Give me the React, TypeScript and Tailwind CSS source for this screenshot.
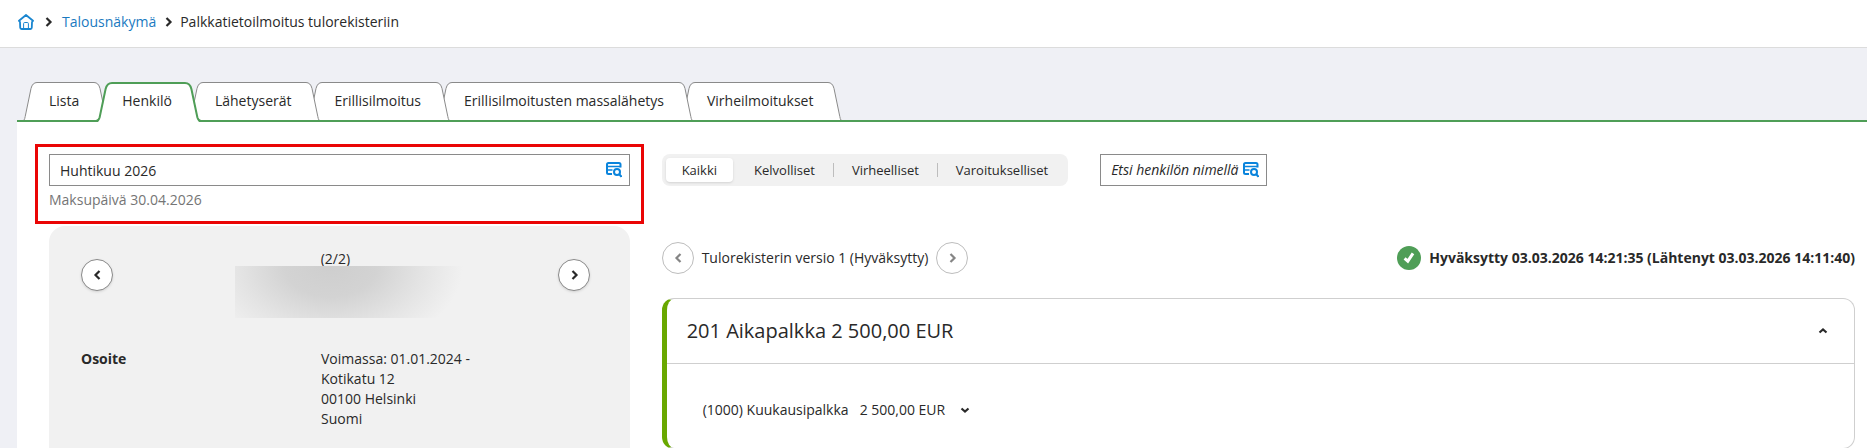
import { useState } from "react";

const tabs = [
  { label: "Lista", layer: "z-[5]" },
  { label: "Henkilö", layer: "z-[6]" },
  { label: "Lähetyserät", layer: "z-[4]" },
  { label: "Erillisilmoitus", layer: "z-[3]" },
  { label: "Erillisilmoitusten massalähetys", layer: "z-[2]" },
  { label: "Virheilmoitukset", layer: "z-[1]" },
];

const filters = ["Kaikki", "Kelvolliset", "Virheelliset", "Varoitukselliset"];

const address = ["Voimassa: 01.01.2024 -", "Kotikatu 12", "00100 Helsinki", "Suomi"];

const chevrons = {
  left: "M8.5 2 L4.5 6 L8.5 10",
  right: "M4.5 2 L8.5 6 L4.5 10",
  up: "M2.5 7.5 L6 4.5 L9.5 7.5",
  down: "M2.5 4.5 L6 7.5 L9.5 4.5",
};

function Chevron({ direction }: { direction: keyof typeof chevrons }) {
  return (
    <svg className="size-3 shrink-0" viewBox="0 0 12 12" fill="none" stroke="currentColor" strokeWidth="2.2" aria-hidden="true">
      <path d={chevrons[direction]} />
    </svg>
  );
}

function HomeIcon() {
  return (
    <svg className="size-4" viewBox="0 0 16 16" fill="none" stroke="currentColor" aria-hidden="true">
      <path d="M8 1 L15 6.8 L14 8 L13.8 13.6 Q13.8 15 12.4 15 H3.6 Q2.2 15 2.2 13.6 L2 8 L1 6.8 Z" strokeWidth="1.8" strokeLinejoin="round" />
      <path d="M5.6 15 V9.6 Q5.6 8.5 6.7 8.5 H9.3 Q10.4 8.5 10.4 9.6 V15" strokeWidth="1" />
    </svg>
  );
}

function TableSearchIcon() {
  return (
    <svg className="size-4" viewBox="0 0 16 16" fill="none" stroke="currentColor" aria-hidden="true">
      <path d="M14.5 5.5 V2.5 Q14.5 1 13 1 H2.5 Q1 1 1 2.5 V10.5 Q1 12 2.5 12 H6" strokeWidth="2" />
      <path d="M1 4.5 H14.5 M1 8 H6.5" strokeWidth="1.4" />
      <circle cx="11" cy="10" r="3" strokeWidth="2" />
      <path d="M13 12 L15.5 14.8" strokeWidth="2" />
    </svg>
  );
}

function TabEdge({ active, right }: { active: boolean; right?: boolean }) {
  const flip = right ? "-scale-x-100" : "";
  if (active) {
    return (
      <svg className={`h-10 w-4 shrink-0 ${flip}`} viewBox="0 0 16 40" fill="none" aria-hidden="true">
        <path d="M2 40 L4 36 L10 8 Q11.5 1 16 1 V40 Z" fill="#fff" />
        <path d="M0 39 C2.5 39 3 37.5 3.6 35.5 L9.6 7 Q11 1 16 1" stroke="#4f9e57" strokeWidth="2" />
      </svg>
    );
  }
  return (
    <svg className={`h-[38px] w-4 shrink-0 ${flip}`} viewBox="0 0 16 38" fill="none" aria-hidden="true">
      <path d="M1 38 L8 6.5 Q9.5 0.5 16 0.5 V38 Z" fill="#fff" />
      <path d="M1 38 Q1.8 37 2.2 34.5 L8 6.5 Q9.5 0.5 14 0.5 H16" stroke="#8a8a8a" />
    </svg>
  );
}

function Tab({ label, layer, active, onClick }: { label: string; layer: string; active: boolean; onClick: () => void }) {
  return (
    <button
      role="tab"
      aria-selected={active}
      onClick={onClick}
      className={`relative -ml-3 flex first:ml-0 ${active ? "-mb-[2px] h-10" : "h-[38px]"} ${layer}`}
    >
      <TabEdge active={active} />
      <span className={`h-full bg-white pr-[13px] pl-[10px] ${active ? "border-t-2 border-[#4f9e57] pt-[7px]" : "border-t border-[#8a8a8a] pt-2"}`}>
        {label}
      </span>
      <TabEdge active={active} right />
    </button>
  );
}

export default function App() {
  const [tab, setTab] = useState("Henkilö");
  const [filter, setFilter] = useState("Kaikki");

  return (
    <div className="flex min-h-screen flex-col bg-[#eff0f5] font-['Open_Sans',sans-serif] text-sm leading-5 text-[#292929]">
      <header className="flex h-12 items-center border-b border-[#dcdcdc] bg-white px-[18px] pb-[3px]">
        <nav className="flex items-center" aria-label="Murupolku">
          <a href="#" aria-label="Etusivu" className="text-[#1a86d0]">
            <HomeIcon />
          </a>
          <span className="mx-2">
            <Chevron direction="right" />
          </span>
          <a href="#" className="text-[#1a7abf]">Talousnäkymä</a>
          <span className="mx-[6px]">
            <Chevron direction="right" />
          </span>
          <span>Palkkatietoilmoitus tulorekisteriin</span>
        </nav>
      </header>

      <main className="mt-[34px] flex grow flex-col pl-[17px]">
        <div role="tablist" className="isolate flex h-10 border-b-2 border-[#4f9e57] pl-[6px]">
          {tabs.map((t) => (
            <Tab key={t.label} label={t.label} layer={t.layer} active={t.label === tab} onClick={() => setTab(t.label)} />
          ))}
        </div>

        <div className="grid grow grid-cols-3 gap-8 bg-white pt-[22px] pr-3 pl-8">
          <div className="flex flex-col">
            <div className="-mx-[14px] h-20 border-3 border-[#ea0505] px-[11px] pt-[7px]">
              <div className="flex h-8 items-center border border-[#8a8a8a] bg-white pr-[7px] pl-[10px]">
                <input aria-label="Palkkakausi" defaultValue="Huhtikuu 2026" className="min-w-0 grow pt-[2px] outline-none" />
                <button aria-label="Valitse palkkakausi" className="text-[#0a84dc]">
                  <TableSearchIcon />
                </button>
              </div>
              <p className="mt-1 text-[#757575]">Maksupäivä 30.04.2026</p>
            </div>

            <section className="mt-[2px] grow rounded-t-2xl bg-[#f1f1f1] pt-[23px] pr-10 pb-5 pl-8">
              <div className="flex items-start justify-between">
                <button aria-label="Edellinen henkilö" className="mt-[10px] flex size-8 items-center justify-center rounded-full border border-[#8a8a8a] bg-white shadow-sm">
                  <Chevron direction="left" />
                </button>
                <div className="w-64">
                  <p className="text-center">(2/2)</p>
                  <div className="relative -mt-[3px] ml-7 h-[52px] bg-[radial-gradient(ellipse_58%_170%_at_42%_0%,#cecece_0%,#d3d3d3_35%,#e4e4e4_70%,#f1f1f1_100%)]" />
                </div>
                <button aria-label="Seuraava henkilö" className="mt-[10px] flex size-8 items-center justify-center rounded-full border border-[#8a8a8a] bg-white shadow-sm">
                  <Chevron direction="right" />
                </button>
              </div>
              <dl className="mt-[31px] grid grid-cols-[240px_1fr]">
                <dt className="font-bold">Osoite</dt>
                <dd>
                  {address.map((line) => (
                    <p key={line}>{line}</p>
                  ))}
                </dd>
              </dl>
            </section>
          </div>

          <div className="col-span-2 pt-[10px]">
            <div className="flex gap-8">
              <div className="flex h-8 items-center rounded-lg bg-[#f1f1f1] p-1 text-[13px]">
                {filters.map((name, i) => (
                  <div key={name} className="flex items-center">
                    {i > 0 && <span className={`mx-[2px] h-[14px] w-px ${i > 1 ? "bg-[#bdbdbd]" : ""}`} />}
                    <button
                      aria-pressed={name === filter}
                      onClick={() => setFilter(name)}
                      className={`h-6 rounded px-4 ${name === filter ? "bg-white shadow-sm" : ""}`}
                    >
                      {name}
                    </button>
                  </div>
                ))}
              </div>
              <div className="flex h-8 w-[167px] items-center border border-[#8a8a8a] bg-white pr-[7px] pl-[10px]">
                <input aria-label="Etsi henkilön nimellä" placeholder="Etsi henkilön nimellä" className="min-w-0 grow italic outline-none placeholder:text-[#292929]" />
                <button aria-label="Hae henkilö" className="text-[#0a84dc]">
                  <TableSearchIcon />
                </button>
              </div>
            </div>

            <div className="mt-14 flex items-center justify-between">
              <div className="flex items-center gap-2">
                <button aria-label="Edellinen versio" className="flex size-8 items-center justify-center rounded-full border border-[#bdbdbd] text-[#858585]">
                  <Chevron direction="left" />
                </button>
                <span>Tulorekisterin versio 1 (Hyväksytty)</span>
                <button aria-label="Seuraava versio" className="flex size-8 items-center justify-center rounded-full border border-[#bdbdbd] text-[#858585]">
                  <Chevron direction="right" />
                </button>
              </div>
              <div className="flex items-center gap-2 font-bold">
                <svg className="size-6" viewBox="0 0 24 24" fill="none" aria-hidden="true">
                  <circle cx="12" cy="12" r="12" fill="#4f9e57" />
                  <path d="M7.6 12.4 L10.8 15.2 L16 7.4" stroke="#fff" strokeWidth="3" />
                </svg>
                <span>Hyväksytty 03.03.2026 14:21:35 (Lähtenyt 03.03.2026 14:11:40)</span>
              </div>
            </div>

            <section className="mt-6 rounded-xl border border-l-5 border-[#cfcfcf] border-l-[#69a800]">
              <div className="flex h-[65px] items-center justify-between border-b border-[#cfcfcf] pr-[25px] pl-5">
                <h2 className="text-xl">201 Aikapalkka 2 500,00 EUR</h2>
                <button aria-label="Sulje palkkalaji">
                  <Chevron direction="up" />
                </button>
              </div>
              <div className="flex items-center pt-9 pb-7 pl-9">
                <span>(1000) Kuukausipalkka</span>
                <span className="ml-[11px]">2 500,00 EUR</span>
                <button aria-label="Näytä erittely" className="ml-[14px]">
                  <Chevron direction="down" />
                </button>
              </div>
            </section>
          </div>
        </div>
      </main>
    </div>
  );
}
